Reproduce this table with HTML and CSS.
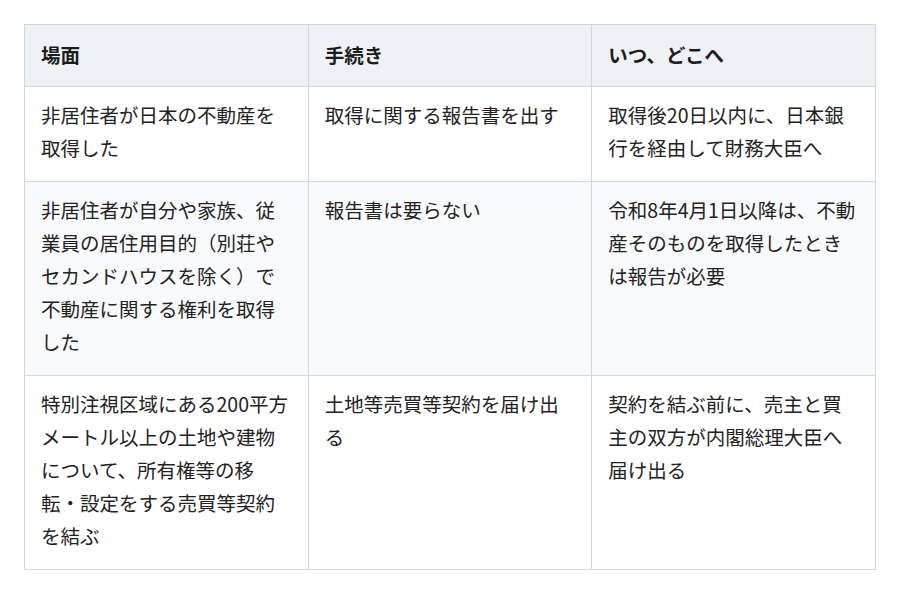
FILE: index.html
```html
<!DOCTYPE html>
<html lang="ja">
<head>
<meta charset="utf-8">
<link rel="stylesheet" href="styles.css">
</head>
<body>
<table class="proc-table">
  <thead>
    <tr>
      <th>場面</th>
      <th>手続き</th>
      <th>いつ、どこへ</th>
    </tr>
  </thead>
  <tbody>
    <tr>
      <td>非居住者が日本の不動産を取得した</td>
      <td>取得に関する報告書を出す</td>
      <td>取得後20日以内に、日本銀行を経由して財務大臣へ</td>
    </tr>
    <tr>
      <td>非居住者が自分や家族、従業員の居住用目的（別荘やセカンドハウスを除く）で不動産に関する権利を取得した</td>
      <td>報告書は要らない</td>
      <td>令和8年4月1日以降は、不動産そのものを取得したときは報告が必要</td>
    </tr>
    <tr>
      <td>特別注視区域にある200平方メートル以上の土地や建物について、所有権等の移転・設定をする売買等契約を結ぶ</td>
      <td>土地等売買等契約を届け出る</td>
      <td>契約を結ぶ前に、売主と買主の双方が内閣総理大臣へ届け出る</td>
    </tr>
  </tbody>
</table>
</body>
</html>
```

FILE: styles.css
```css
html, body {
  margin: 0;
  background: #ffffff;
}
body {
  padding: 24px;
  font-family: "Noto Sans CJK JP", "Noto Sans", sans-serif;
  color: #222222;
}
.proc-table {
  width: 852px;
  table-layout: fixed;
  border-collapse: collapse;
  font-size: 19.5px;
  line-height: 32.8px;
}
.proc-table th,
.proc-table td {
  border: 1px solid #cfd6de;
  padding: 12px 18px 17px 16px;
  text-align: left;
  vertical-align: top;
  line-break: strict;
}
.proc-table th {
  padding-top: 14px;
  padding-bottom: 14px;
  background: #eef2f6;
  font-weight: 700;
  color: #1c1c1c;
}
.proc-table tbody tr:nth-child(even) td {
  background: #f8fafc;
}
```
